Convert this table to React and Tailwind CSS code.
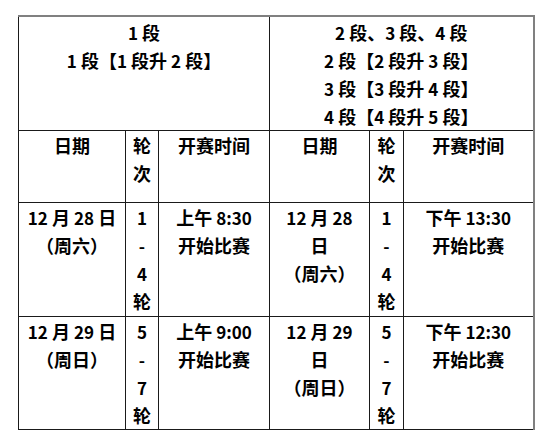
import React from "react";

const N = ({ children }) => <span className="text-[17px] leading-[20px]">{children}</span>;

const cell = "border border-[#1a1a1a] align-top text-center px-0 pt-0 leading-[28px]";

function Rounds({ from, to }) {
  return (
    <div className="flex flex-col items-center">
      <div className="h-[28px]"><N>{from}</N></div>
      <div className="h-[28px]"><N>-</N></div>
      <div className="h-[28px]"><N>{to}</N></div>
      <div className="h-[28px]">轮</div>
    </div>
  );
}

export default function App() {
  return (
    <div
      className="bg-white w-[551px] h-[448px] pl-[18px] pt-[15px] text-black font-semibold text-[18px]"
      style={{ fontFamily: '"Noto Sans CJK SC", "Liberation Sans", sans-serif' }}
    >
      <table className="table-fixed border-collapse w-[515px]">
        <colgroup>
          <col className="w-[107px]" />
          <col className="w-[33px]" />
          <col className="w-[111px]" />
          <col className="w-[100px]" />
          <col className="w-[34px]" />
          <col className="w-[130px]" />
        </colgroup>
        <tbody>
          <tr className="h-[114px]">
            <td colSpan={3} className={`${cell} pt-[1px] border-t-2 border-t-[#808080]`}>
              <div><N>1</N> 段</div>
              <div><N>1</N> 段【<N>1</N> 段升 <N>2</N> 段】</div>
            </td>
            <td colSpan={3} className={`${cell} pt-[1px] border-t-2 border-t-[#808080] border-r-2 border-r-[#808080]`}>
              <div><N>2</N> 段、<N>3</N> 段、<N>4</N> 段</div>
              <div><N>2</N> 段【<N>2</N> 段升 <N>3</N> 段】</div>
              <div><N>3</N> 段【<N>3</N> 段升 <N>4</N> 段】</div>
              <div><N>4</N> 段【<N>4</N> 段升 <N>5</N> 段】</div>
            </td>
          </tr>
          <tr className="h-[72px]">
            <td className={cell}>日期</td>
            <td className={cell}><div>轮</div><div>次</div></td>
            <td className={cell}>开赛时间</td>
            <td className={cell}>日期</td>
            <td className={cell}><div>轮</div><div>次</div></td>
            <td className={`${cell} border-r-2 border-r-[#808080]`}>开赛时间</td>
          </tr>
          <tr className="h-[114px]">
            <td className={cell}>
              <div><N>12</N> 月 <N>28</N> 日</div>
              <div>（周六）</div>
            </td>
            <td className={cell}><Rounds from="1" to="4" /></td>
            <td className={cell}>
              <div>上午 <N>8:30</N></div>
              <div>开始比赛</div>
            </td>
            <td className={cell}>
              <div><N>12</N> 月 <N>28</N></div>
              <div>日</div>
              <div>（周六）</div>
            </td>
            <td className={cell}><Rounds from="1" to="4" /></td>
            <td className={`${cell} border-r-2 border-r-[#808080]`}>
              <div>下午 <N>13:30</N></div>
              <div>开始比赛</div>
            </td>
          </tr>
          <tr className="h-[112px]">
            <td className={cell}>
              <div><N>12</N> 月 <N>29</N> 日</div>
              <div>（周日）</div>
            </td>
            <td className={cell}><Rounds from="5" to="7" /></td>
            <td className={cell}>
              <div>上午 <N>9:00</N></div>
              <div>开始比赛</div>
            </td>
            <td className={cell}>
              <div><N>12</N> 月 <N>29</N></div>
              <div>日</div>
              <div>（周日）</div>
            </td>
            <td className={cell}><Rounds from="5" to="7" /></td>
            <td className={`${cell} border-r-2 border-r-[#808080]`}>
              <div>下午 <N>12:30</N></div>
              <div>开始比赛</div>
            </td>
          </tr>
        </tbody>
      </table>
    </div>
  );
}
